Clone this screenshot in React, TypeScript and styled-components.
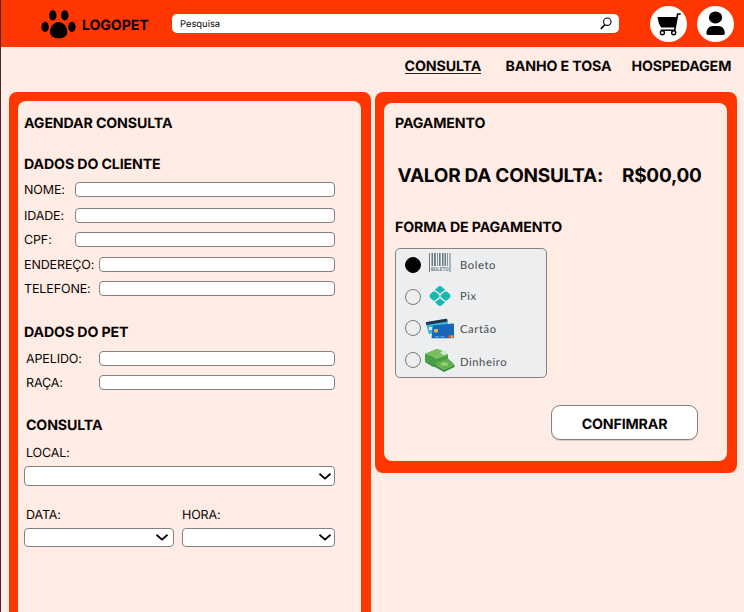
import React from "react";
import styled, { createGlobalStyle } from "styled-components";

const ORANGE = "#ff3600";
const BLUSH = "#ffece5";

const GlobalStyle = createGlobalStyle`
  * { box-sizing: border-box; }
  html, body { margin: 0; height: 100%; overflow: hidden; }
  body {
    background: ${BLUSH};
    color: #080404;
    font-family: Inter, sans-serif;
    text-rendering: geometricPrecision;
  }
`;

const Page = styled.div`
  width: 744px;
  height: 612px;
  overflow: hidden;
  border-left: 1px solid #43302d;
  background: ${BLUSH};
`;

const Header = styled.header`
  display: flex;
  align-items: center;
  height: 47px;
  padding-left: 40px;
  background: ${ORANGE};
`;

const Brand = styled.div`
  display: flex;
  align-items: center;
  gap: 6px;
  width: 131px;
  height: 47px;
  font-size: 14.2px;
  font-weight: 700;
  letter-spacing: -0.12px;
  white-space: nowrap;
  padding-top: 2px;
  & > span { padding-top: 2px; }
`;

const SearchBar = styled.div`
  display: flex;
  align-items: center;
  justify-content: space-between;
  width: 447px;
  height: 19px;
  padding: 0 7px 0 8px;
  border-radius: 5px;
  background: #fff;
  font-size: 9.4px;
  & > span { padding-top: 2px; }
`;

const RoundButton = styled.button<{ $gap: number }>`
  display: block;
  width: 37px;
  height: 36px;
  margin: 0 0 0 ${(p) => p.$gap}px;
  padding: 0;
  border: 0;
  border-radius: 50%;
  background: #fff;
`;

const Nav = styled.nav`
  display: flex;
  height: 45px;
  padding: 9px 0 0 403.5px;
  font-size: 14.2px;
  font-weight: 700;
  letter-spacing: -0.1px;
  line-height: 21px;
  white-space: nowrap;
`;

const NavItem = styled.a<{ $width: number; $active?: boolean }>`
  width: ${(p) => p.$width}px;
  height: 18px;
  margin-right: 25px;
  border-bottom: ${(p) => (p.$active ? "1px solid #222" : "0")};
  & + & + & { margin-left: -4px; }
`;

const Columns = styled.main`
  display: flex;
  align-items: flex-start;
  gap: 4px;
  padding-left: 7.5px;
`;

const Panel = styled.section<{ $height: number; $frame: string }>`
  width: 362px;
  height: ${(p) => p.$height}px;
  padding: ${(p) => p.$frame};
  border-radius: 8px;
  background: ${ORANGE};
`;

const PanelBody = styled.div<{ $pad: string }>`
  height: 100%;
  padding: ${(p) => p.$pad};
  border-radius: 8px;
  background: ${BLUSH};
`;

const Heading = styled.h2<{ $top?: number; $indent?: number; $line?: number }>`
  height: 18px;
  margin: ${(p) => p.$top ?? 0}px 0 0 ${(p) => p.$indent ?? 0}px;
  font-size: 14.2px;
  font-weight: 700;
  letter-spacing: -0.13px;
  line-height: ${(p) => p.$line ?? 20}px;
  white-space: nowrap;
`;

const FieldRow = styled.label<{ $label: number; $top: number; $indent?: number }>`
  display: grid;
  grid-template-columns: ${(p) => p.$label}px 1fr;
  align-items: start;
  height: 15px;
  width: 311px;
  margin-top: ${(p) => p.$top}px;
  font-size: 12.5px;
  letter-spacing: -0.12px;
  line-height: 18px;
  white-space: nowrap;
  & > span { padding-left: ${(p) => p.$indent ?? 0}px; }
`;

const Input = styled.input`
  display: block;
  width: 100%;
  height: 15px;
  padding: 0 4px;
  border: 1px solid #858080;
  border-radius: 4px;
  background: #fff;
  outline: none;
`;

const SelectGroup = styled.div<{ $width: number }>`
  width: ${(p) => p.$width}px;
`;

const Caption = styled.div<{ $indent: number }>`
  height: 15px;
  padding-left: ${(p) => p.$indent}px;
  font-size: 12.5px;
  letter-spacing: -0.12px;
  line-height: 18px;
`;

const SelectBox = styled.div<{ $height: number; $end?: number }>`
  display: flex;
  align-items: center;
  justify-content: flex-end;
  height: ${(p) => p.$height}px;
  margin-top: 6px;
  padding-right: ${(p) => p.$end ?? 2}px;
  border: 1px solid #858080;
  border-radius: 4px;
  background: #fff;
`;

const SelectLine = styled.div<{ $top: number }>`
  display: flex;
  gap: 8px;
  margin-top: ${(p) => p.$top}px;
`;

const Total = styled.div`
  display: flex;
  justify-content: space-between;
  width: 304px;
  height: 24px;
  margin: 31px 0 0 2.5px;
  font-size: 19px;
  font-weight: 700;
  letter-spacing: -0.27px;
  line-height: 25px;
  white-space: nowrap;
`;

const Methods = styled.div`
  width: 152px;
  height: 130px;
  margin-top: 12px;
  padding: 0.5px 0 0 8.5px;
  border: 1px solid #858282;
  border-radius: 5px;
  background: #eceef0;
`;

const Method = styled.div`
  display: grid;
  grid-template-columns: 17px 35px 1fr;
  align-items: center;
  height: 31.5px;
  color: #484a4c;
  font-size: 11.2px;
  white-space: nowrap;
`;

const Radio = styled.span<{ $on?: boolean }>`
  width: 16px;
  height: 16px;
  border: 1px solid ${(p) => (p.$on ? "#000" : "#777")};
  border-radius: 50%;
  background: ${(p) => (p.$on ? "#000" : "transparent")};
`;

const MethodIcon = styled.svg<{ $drop?: number }>`
  display: block;
  width: 32px;
  height: 26px;
  margin: ${(p) => p.$drop ?? 0}px 0 0 3.5px;
  overflow: visible;
`;

const MethodName = styled.span<{ $drop?: number; $spacing?: number }>`
  padding-left: 3.5px;
  margin-top: ${(p) => p.$drop ?? 0}px;
  font-family: Lato, sans-serif;
  letter-spacing: ${(p) => p.$spacing ?? 0.6}px;
`;

const Confirm = styled.button`
  display: block;
  width: 147px;
  height: 35px;
  margin: 27px 0 0 156px;
  padding: 3px 0 0;
  border: 1px solid #858080;
  border-radius: 9px;
  background: #fff;
  box-shadow: 0 1px 0 #d9cdc9;
  color: #080404;
  font: 700 14.2px Inter, sans-serif;
  letter-spacing: -0.15px;
  text-rendering: inherit;
`;

const Paw = () => (
  <svg width="35" height="29" viewBox="0 0 35 29">
    <ellipse cx="11.8" cy="5.4" rx="3.7" ry="5.1" />
    <ellipse cx="23.8" cy="5.4" rx="3.7" ry="5.1" />
    <ellipse cx="4.1" cy="16.9" rx="3.7" ry="5.1" />
    <ellipse cx="30.9" cy="16.9" rx="3.7" ry="5.1" />
    <path d="M17.6 12.1C23 12.1 26.2 17.5 26.2 22.2C26.2 26.4 22 28.2 17.6 28.2S9 26.4 9 22.2C9 17.5 12.2 12.1 17.6 12.1Z" />
  </svg>
);

const Magnifier = () => (
  <svg width="12" height="13" viewBox="0 0 12 13" fill="none" stroke="#000">
    <circle cx="7.3" cy="4.7" r="3.7" strokeWidth="1.1" />
    <path d="M4.8 7.7L0.8 11.9" strokeWidth="1.6" />
  </svg>
);

const Cart = () => (
  <svg width="37" height="36" viewBox="0 0 37 36" fill="none" stroke="#000">
    <path d="M7.5 11H27.5L25.3 21.5H11.2L8.8 17.3Z" fill="#000" stroke="none" />
    <path d="M30.8 8H27.6L24.7 24.2H10.7" strokeWidth="1.6" />
    <circle cx="12.4" cy="26.8" r="2" strokeWidth="1.4" />
    <circle cx="23.7" cy="26.8" r="2" strokeWidth="1.4" />
  </svg>
);

const Person = () => (
  <svg width="37" height="36" viewBox="0 0 37 36">
    <ellipse cx="18.5" cy="11.5" rx="6.6" ry="5.9" />
    <path d="M9.4 27.2C9.4 22.8 12.4 20 16 20H21.4C25 20 27.8 22.8 27.8 27.2Q27.8 29 25.8 29H11.4Q9.4 29 9.4 27.2Z" />
  </svg>
);

const Chevron = () => (
  <svg width="14" height="9" viewBox="0 0 14 9" fill="none">
    <path d="M1.5 1.8L7 6.6L12.5 1.8" stroke="#000" strokeWidth="1.8" />
  </svg>
);

const Barcode = () => (
  <MethodIcon viewBox="0 0 32 26" $drop={-4}>
    <g fill="#6b7b86">
      <path d="M4 3H5V22H4ZM6.5 3H8V16H6.5ZM9 3H10.8V16H9ZM12 3H12.8V16H12ZM14 3H15.6V16H14ZM17 3H18.5V16H17ZM19.5 3H21V16H19.5ZM22 3H22.8V16H22ZM24.5 3H25.5V22H24.5Z" />
      <text x="5.9" y="21.2" fontSize="5" fontWeight="700" textLength="17.8" lengthAdjust="spacingAndGlyphs">BOLETO</text>
    </g>
  </MethodIcon>
);

const PixMark = () => (
  <MethodIcon viewBox="0 0 32 26" $drop={-1}>
    <g fill="#15b9ad">
      <path d="M9.6 7.3L13.2 3.7Q15 2.1 16.8 3.7L20.4 7.3Q18 7.6 15 10.8Q12 7.6 9.6 7.3Z" />
      <path d="M9.6 18.7L13.2 22.3Q15 23.9 16.8 22.3L20.4 18.7Q18 18.4 15 15.2Q12 18.4 9.6 18.7Z" />
      <path d="M8.3 8.2Q11.2 8.4 14.2 11.9Q15 13 14.2 14.1Q11.2 17.6 8.3 17.8L5.2 14.7Q3.8 13 5.2 11.3Z" />
      <path d="M21.7 8.2Q18.8 8.4 15.8 11.9Q15 13 15.8 14.1Q18.8 17.6 21.7 17.8L24.8 14.7Q26.2 13 24.8 11.3Z" />
    </g>
  </MethodIcon>
);

const Cards = () => (
  <MethodIcon viewBox="0 0 32 26" $drop={1}>
    <path d="M0.8 6.2L21 2.8Q22 2.7 22.3 3.8L24 13L4.8 18Q3.8 18.1 3.5 17Z" fill="#36b4dc" />
    <path d="M0.8 6.2L21 2.8Q22 2.7 22.3 3.8L22.6 5.5L1.3 9Z" fill="#20354a" />
    <rect x="4" y="11" width="3" height="3" fill="#d3e9ed" />
    <path d="M8 9.4L28 7.6Q29 7.6 29 8.6V21.2Q29 22.3 28 22.3H7.3Q6.4 22.3 6.5 21.2Z" fill="#1768b7" />
    <rect x="9" y="13" width="4" height="3.6" rx="0.8" fill="#e5b655" />
    <path d="M10 20.8H14M15.5 20.8H19.5" stroke="#7bb6e5" strokeWidth="1" />
    <circle cx="24.5" cy="20.5" r="1.5" fill="#ed4736" />
    <circle cx="26.9" cy="20.5" r="1.5" fill="#edac2e" />
  </MethodIcon>
);

const Cash = () => (
  <MethodIcon viewBox="0 0 32 26" $drop={3}>
    <path d="M0 6L12 1L20 4V14L8 19L0 14Z" fill="#3f9a44" />
    <path d="M0 6L12 1L20 4L8 9Z" fill="#78bd5c" />
    <path d="M0 9L8 12L19 8M0 12L8 15L19 11" fill="none" stroke="#5cab4f" />
    <path d="M7 8L18 3L23 7V13L11 17L7 14Z" fill="#47a047" />
    <path d="M7 8L18 3L23 7L11 11Z" fill="#80c364" />
    <path d="M15 4.2L19 2.6L22.5 5.6L18.5 7.3Z" fill="#d6e6d0" />
    <path d="M9 16L23 10.5L29.5 17V19L19 24L9 18.5Z" fill="#378e3c" />
    <path d="M9 15.5L23 10.5L29.5 17L19 21.5Z" fill="#60b04f" />
    <ellipse cx="19.5" cy="16" rx="3.8" ry="2" fill="#94c973" />
    <path d="M11 17L19 21.5L28 17.3" fill="none" stroke="#8bc870" strokeWidth="0.7" />
  </MethodIcon>
);

const Field = ({ name, label, top, indent }: { name: string; label: number; top: number; indent?: number }) => (
  <FieldRow $label={label} $top={top} $indent={indent}>
    <span>{name}</span>
    <Input aria-label={name} />
  </FieldRow>
);

const Select = ({ name, width, height, indent, end }: { name: string; width: number; height: number; indent: number; end?: number }) => (
  <SelectGroup $width={width}>
    <Caption $indent={indent}>{name}</Caption>
    <SelectBox $height={height} $end={end}><Chevron /></SelectBox>
  </SelectGroup>
);

export default function App() {
  return (
    <Page>
      <GlobalStyle />
      <Header>
        <Brand><Paw /><span>LOGOPET</span></Brand>
        <SearchBar><span>Pesquisa</span><Magnifier /></SearchBar>
        <RoundButton $gap={30.5} aria-label="Carrinho"><Cart /></RoundButton>
        <RoundButton $gap={10.5} aria-label="Perfil"><Person /></RoundButton>
      </Header>
      <Nav>
        <NavItem $width={76} $active>CONSULTA</NavItem>
        <NavItem $width={105}>BANHO E TOSA</NavItem>
        <NavItem $width={100}>HOSPEDAGEM</NavItem>
      </Nav>
      <Columns>
        <Panel $height={540} $frame="9px 9.5px 0 9px">
          <PanelBody $pad="13px 0 0 6.5px">
            <Heading>AGENDAR CONSULTA</Heading>
            <Heading $top={23}>DADOS DO CLIENTE</Heading>
            <Field name="NOME:" label={51} top={9} />
            <Field name="IDADE:" label={51} top={11} />
            <Field name="CPF:" label={51} top={9} />
            <Field name="ENDEREÇO:" label={75} top={10} />
            <Field name="TELEFONE:" label={75} top={9} />
            <Heading $top={27} $line={19}>DADOS DO PET</Heading>
            <Field name="APELIDO:" label={75} top={10} indent={2} />
            <Field name="RAÇA:" label={75} top={9} indent={2} />
            <Heading $top={26} $indent={2}>CONSULTA</Heading>
            <SelectLine $top={11}>
              <Select name="LOCAL:" width={311} height={20} indent={2} />
            </SelectLine>
            <SelectLine $top={21}>
              <Select name="DATA:" width={150} height={19} indent={2} end={4} />
              <Select name="HORA:" width={153} height={19} indent={0} />
            </SelectLine>
          </PanelBody>
        </Panel>
        <Panel $height={381} $frame="11px 9.5px 12px 9px">
          <PanelBody $pad="11px 0 0 11.5px">
            <Heading>PAGAMENTO</Heading>
            <Total><span>VALOR DA CONSULTA:</span><span>R$00,00</span></Total>
            <Heading $top={31}>FORMA DE PAGAMENTO</Heading>
            <Methods>
              <Method><Radio $on /><Barcode /><MethodName>Boleto</MethodName></Method>
              <Method><Radio /><PixMark /><MethodName>Pix</MethodName></Method>
              <Method><Radio /><Cards /><MethodName $drop={2}>Cartão</MethodName></Method>
              <Method><Radio /><Cash /><MethodName $drop={5}>Dinheiro</MethodName></Method>
            </Methods>
            <Confirm>CONFIMRAR</Confirm>
          </PanelBody>
        </Panel>
      </Columns>
    </Page>
  );
}
